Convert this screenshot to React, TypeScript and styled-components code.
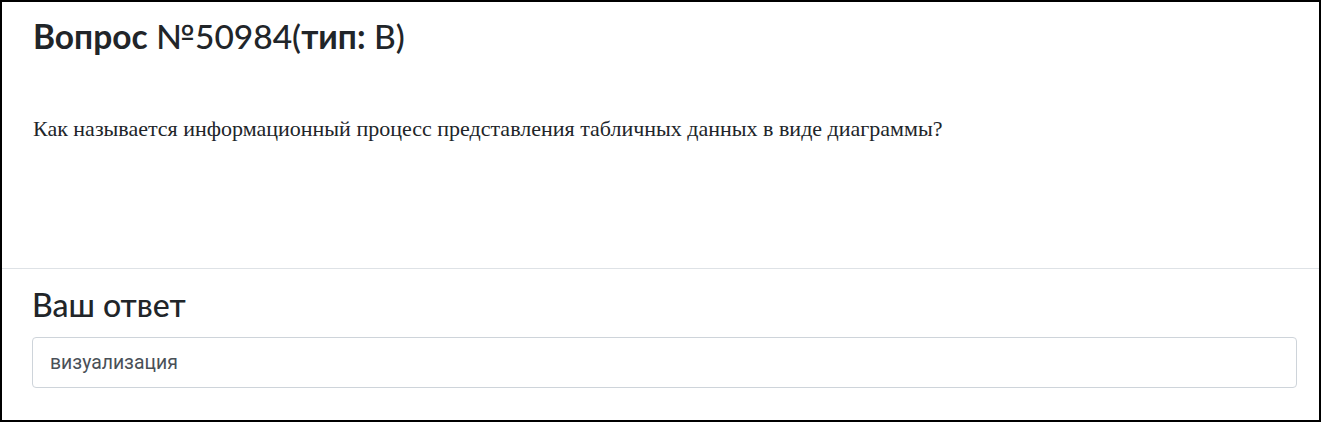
import React from "react";
import styled, { createGlobalStyle } from "styled-components";

const Global = createGlobalStyle`
  html, body { margin: 0; padding: 0; background: #fff; }
  * { box-sizing: border-box; }
`;

const Frame = styled.div`
  width: 1321px;
  height: 422px;
  border: 2px solid #000;
  display: flex;
  flex-direction: column;
  background: #fff;
`;

const QuestionSection = styled.section`
  height: 267px;
  padding: 14px 31px 0;
  border-bottom: 1px solid #dee2e6;
`;

const Title = styled.h2`
  margin: 0;
  font-family: Lato, "Noto Sans", sans-serif;
  font-weight: 500;
  font-size: 33.5px;
  line-height: 1.2;
  color: #212529;
`;

const Strong = styled.span`
  font-weight: 700;
`;

const QuestionText = styled.p`
  margin: 60px 0 0;
  font-family: "Liberation Serif", "Times New Roman", serif;
  font-size: 22px;
  color: #212529;
`;

const AnswerSection = styled.section`
  padding: 17px 22px 0 30px;
  display: flex;
  flex-direction: column;
  gap: 13px;
`;

const AnswerTitle = styled.h3`
  margin: 0;
  font-family: Lato, "Noto Sans", sans-serif;
  font-weight: 500;
  font-size: 32px;
  line-height: 1.2;
  color: #212529;
`;

const AnswerInput = styled.input`
  height: 51px;
  width: 100%;
  border: 1px solid #ced4da;
  border-radius: 4px;
  padding: 0 17px;
  font-family: Roboto, sans-serif;
  font-size: 19.4px;
  color: #495057;
  background: #fff;
  outline: none;
`;

export default function App() {
  return (
    <>
      <Global />
      <Frame>
        <QuestionSection>
          <Title>
            <Strong>Вопрос</Strong> №50984(<Strong>тип:</Strong> B)
          </Title>
          <QuestionText>
            Как называется информационный процесс представления табличных данных в виде диаграммы?
          </QuestionText>
        </QuestionSection>
        <AnswerSection>
          <AnswerTitle>Ваш ответ</AnswerTitle>
          <AnswerInput readOnly value="визуализация" />
        </AnswerSection>
      </Frame>
    </>
  );
}
